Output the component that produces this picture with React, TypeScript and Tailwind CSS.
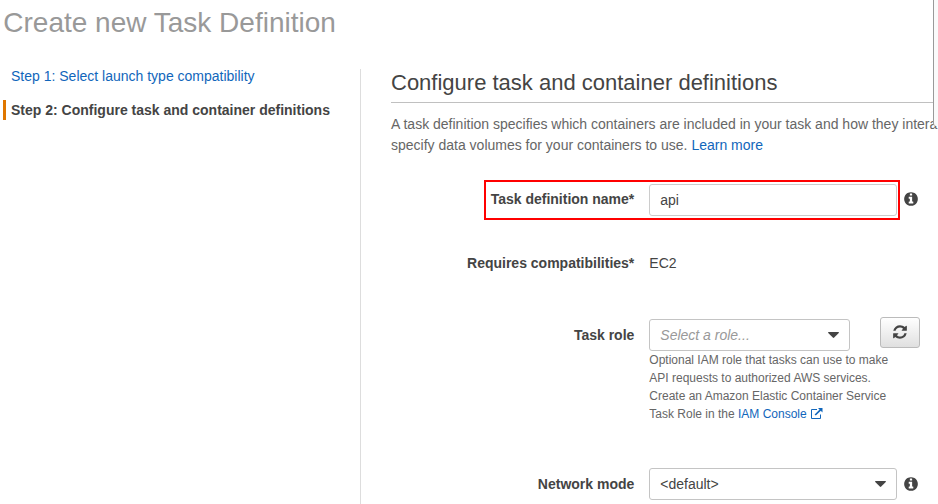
import React from "react";

function InfoIcon() {
  return (
    <svg className="block h-4 w-4 shrink-0" viewBox="0 0 1792 1792" fill="#444">
      <path d="M1152 1376v-160q0-14-9-23t-23-9h-96v-512q0-14-9-23t-23-9h-320q-14 0-23 9t-9 23v160q0 14 9 23t23 9h96v320h-96q-14 0-23 9t-9 23v160q0 14 9 23t23 9h448q14 0 23-9t9-23zm-128-896v-160q0-14-9-23t-23-9h-192q-14 0-23 9t-9 23v160q0 14 9 23t23 9h192q14 0 23-9t9-23zm640 416q0 209-103 385.5t-279.5 279.5-385.5 103-385.5-103-279.5-279.5-103-385.5 103-385.5 279.5-279.5 385.5-103 385.5 103 279.5 279.5 103 385.5z" />
    </svg>
  );
}

function RefreshIcon() {
  return (
    <svg className="block h-4 w-4" viewBox="0 0 1792 1792" fill="#444">
      <path d="M1639 1056q0 5-1 7-64 268-268 434.5t-478 166.5q-146 0-282.5-55t-243.5-157l-129 129q-19 19-45 19t-45-19-19-45v-448q0-26 19-45t45-19h448q26 0 45 19t19 45-19 45l-137 137q71 66 161 102t187 36q134 0 250-65t186-179q11-17 53-117 8-23 30-23h192q13 0 22.5 9.5t9.5 22.5zm25-800v448q0 26-19 45t-45 19h-448q-26 0-45-19t-19-45 19-45l138-138q-148-137-349-137-134 0-250 65t-186 179q-11 17-53 117-8 23-30 23h-199q-13 0-22.5-9.5t-9.5-22.5v-7q65-268 270-434.5t480-166.5q146 0 284 55.5t245 156.5l130-129q19-19 45-19t45 19 19 45z" />
    </svg>
  );
}

function ExternalIcon() {
  return (
    <svg className="ml-1 inline-block h-[11px] w-3 align-[-1px]" viewBox="0 0 12 11">
      <path d="M6 1.5H.5v9h9V6.5" fill="none" stroke="#1166bb" strokeWidth="1" />
      <path d="M4.2 7 9.5 1.8" fill="none" stroke="#1166bb" strokeWidth="1.7" />
      <path d="M7 0h4.5v4.5z" fill="#1166bb" />
    </svg>
  );
}

function Caret() {
  return (
    <svg className="block h-[6px] w-[11px]" viewBox="0 0 11 6" fill="#444">
      <path d="M0 .7Q0 0 .8 0h9.4q.8 0 .8.7L6.2 5.6q-.7.6-1.4 0z" />
    </svg>
  );
}

function Label({ children }: { children: React.ReactNode }) {
  return <div className="w-[244px] shrink-0 pr-[0.7px] text-right font-bold">{children}</div>;
}

export default function App() {
  return (
    <div className="relative h-[504px] w-[938px] overflow-hidden bg-white font-['Liberation_Sans',Arial,sans-serif] text-sm leading-[21px] text-[#444]">
      <h1 className="pt-[3px] pl-[3.3px] text-[28px] leading-[40px] text-[#999]">Create new Task Definition</h1>
      <div className="mt-[26px] flex">
        <nav className="w-[360px] shrink-0 pl-[3px]">
          <div className="h-[31px] pl-2 leading-[14px]">
            <a className="text-[#1166bb]">Step 1: Select launch type compatibility</a>
          </div>
          <div className="h-5 border-l-3 border-[#e07700] pl-[5px] font-bold leading-5">
            Step 2: Configure task and container definitions
          </div>
        </nav>
        <main className="h-[435px] w-[578px] shrink-0 overflow-hidden border-l border-[#ddd] pl-[30px]">
          <h2 className="h-[34px] border-b border-[#c0c0c0] text-[22px] leading-[28px]">
            Configure task and container definitions
          </h2>
          <div className="mt-[11px] whitespace-nowrap text-[#666]">
            <p>A task definition specifies which containers are included in your task and how they intera</p>
            <p>
              specify data volumes for your containers to use. <a className="text-[#1166bb]">Learn more</a>
            </p>
          </div>
          <div className="mt-[24px] flex h-10 items-center">
            <div className="ml-[93px] flex h-10 w-[416px] shrink-0 items-center border-2 border-[#ff0000]">
              <div className="w-[149px] shrink-0 pr-[0.7px] pb-[2px] text-right font-bold">Task definition name*</div>
              <div className="ml-[14px] h-8 w-[248px] shrink-0 rounded-[3px] border border-[#ccc] pt-[5px] pl-[10.3px]">
                api
              </div>
            </div>
            <div className="ml-[3px] pb-[2px]">
              <InfoIcon />
            </div>
          </div>
          <div className="mt-[33px] flex">
            <Label>Requires compatibilities*</Label>
            <div className="ml-[14.3px]">EC2</div>
          </div>
          <div className="mt-[43px] flex h-[107px]">
            <div className="pt-2">
              <Label>Task role</Label>
            </div>
            <div className="ml-[14px] pt-[2px]">
              <div className="flex h-8 w-[201px] items-center justify-between rounded-[3px] border border-[#c4c4c4] pr-[10px] pb-px pl-[10.3px]">
                <span className="pt-px italic text-[#999]">Select a role...</span>
                <Caret />
              </div>
              <div className="w-[231px] whitespace-nowrap pl-[0.3px] text-xs leading-[18px] text-[#666]">
                Optional IAM role that tasks can use to make
                <br />
                API requests to authorized AWS services.
                <br />
                Create an Amazon Elastic Container Service
                <br />
                Task Role in the <a className="text-[#1166bb]">IAM Console</a>
                <ExternalIcon />
              </div>
            </div>
            <button className="flex h-[31px] w-10 shrink-0 items-center justify-center rounded-[3px] border border-[#bbb] bg-linear-to-b from-white to-[#e0e0e0] pb-[2px]">
              <RefreshIcon />
            </button>
          </div>
          <div className="mt-[44px] flex h-8 items-center">
            <Label>Network mode</Label>
            <div className="ml-[14px] flex h-8 w-[248px] shrink-0 items-center justify-between rounded-[3px] border border-[#c4c4c4] pr-[10px] pl-[10.3px]">
              <span>&lt;default&gt;</span>
              <Caret />
            </div>
            <div className="ml-[6px]">
              <InfoIcon />
            </div>
          </div>
        </main>
      </div>
      <div className="absolute top-0 left-[933px] h-[126px] w-[10px] rounded-bl-[3px] border-l border-[#999] bg-[#fafafa]" />
    </div>
  );
}
